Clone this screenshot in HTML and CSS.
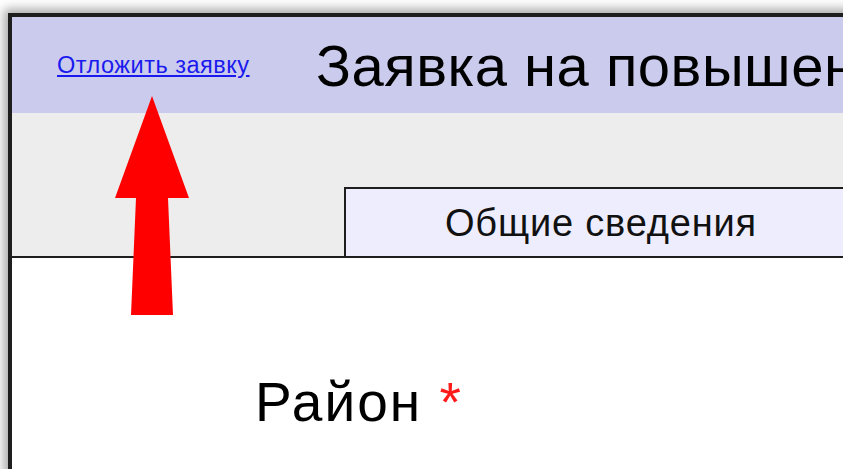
FILE: index.html
```html
<!DOCTYPE html>
<html lang="ru">
<head>
<meta charset="utf-8">
<title>Заявка на повышение</title>
<link rel="stylesheet" href="styles.css">
</head>
<body>
<div class="window">
  <header class="head">
    <a class="postpone" href="#">Отложить заявку</a>
    <h1 class="title">Заявка на повышение квалификации</h1>
  </header>
  <nav class="tabs">
    <div class="tab">Общие сведения</div>
  </nav>
  <main class="form">
    <label class="field-label">Район <span class="req">*</span></label>
  </main>
</div>
<svg class="pointer" width="843" height="469" viewBox="0 0 843 469" aria-hidden="true">
  <polygon points="152,96 189,198 168,198 173,315 131,315 136,198 115,198" fill="#ff0000"/>
</svg>
</body>
</html>
```
FILE: styles.css
```css
html, body {
  margin: 0;
  padding: 0;
  height: 100%;
  overflow: hidden;
}

body {
  background: #ffffff;
  font-family: "Liberation Sans", Arial, sans-serif;
  position: relative;
}

.window {
  margin: 13px 0 0 8px;
  border-left: 4px solid #1e1e1e;
  border-top: 4px solid #1e1e1e;
  box-shadow: -2px -2px 10px 2px rgba(0, 0, 0, 0.35);
  width: 900px;
  height: 600px;
  display: flex;
  flex-direction: column;
  background: #ffffff;
}

.head {
  height: 96px;
  background: #cbcbed;
  display: flex;
  align-items: center;
  padding-left: 45px;
  white-space: nowrap;
}

.postpone {
  font-size: 23.5px;
  letter-spacing: 0.5px;
  color: #1a1aee;
  text-decoration: underline;
  width: 259px;
  flex: none;
}

.title {
  margin: 0;
  font-size: 58px;
  font-weight: normal;
  letter-spacing: 0.5px;
  color: #000000;
}

.tabs {
  height: 143px;
  background: #ededed;
  border-bottom: 2px solid #1e1e1e;
  display: flex;
  align-items: flex-end;
  padding-left: 332px;
}

.tab {
  height: 69px;
  width: 520px;
  box-sizing: border-box;
  border: 2px solid #1e1e1e;
  border-bottom: none;
  background: #ededfd;
  font-size: 38px;
  letter-spacing: 0.8px;
  color: #111111;
  display: flex;
  align-items: center;
  padding-left: 99px;
  padding-top: 2px;
}

.form {
  padding: 112px 0 0 243px;
}

.field-label {
  font-size: 55px;
  letter-spacing: 2px;
  color: #000000;
}

.req {
  color: #ff1a1a;
  letter-spacing: 0;
}

.pointer {
  position: absolute;
  left: 0;
  top: 0;
  pointer-events: none;
}
```
